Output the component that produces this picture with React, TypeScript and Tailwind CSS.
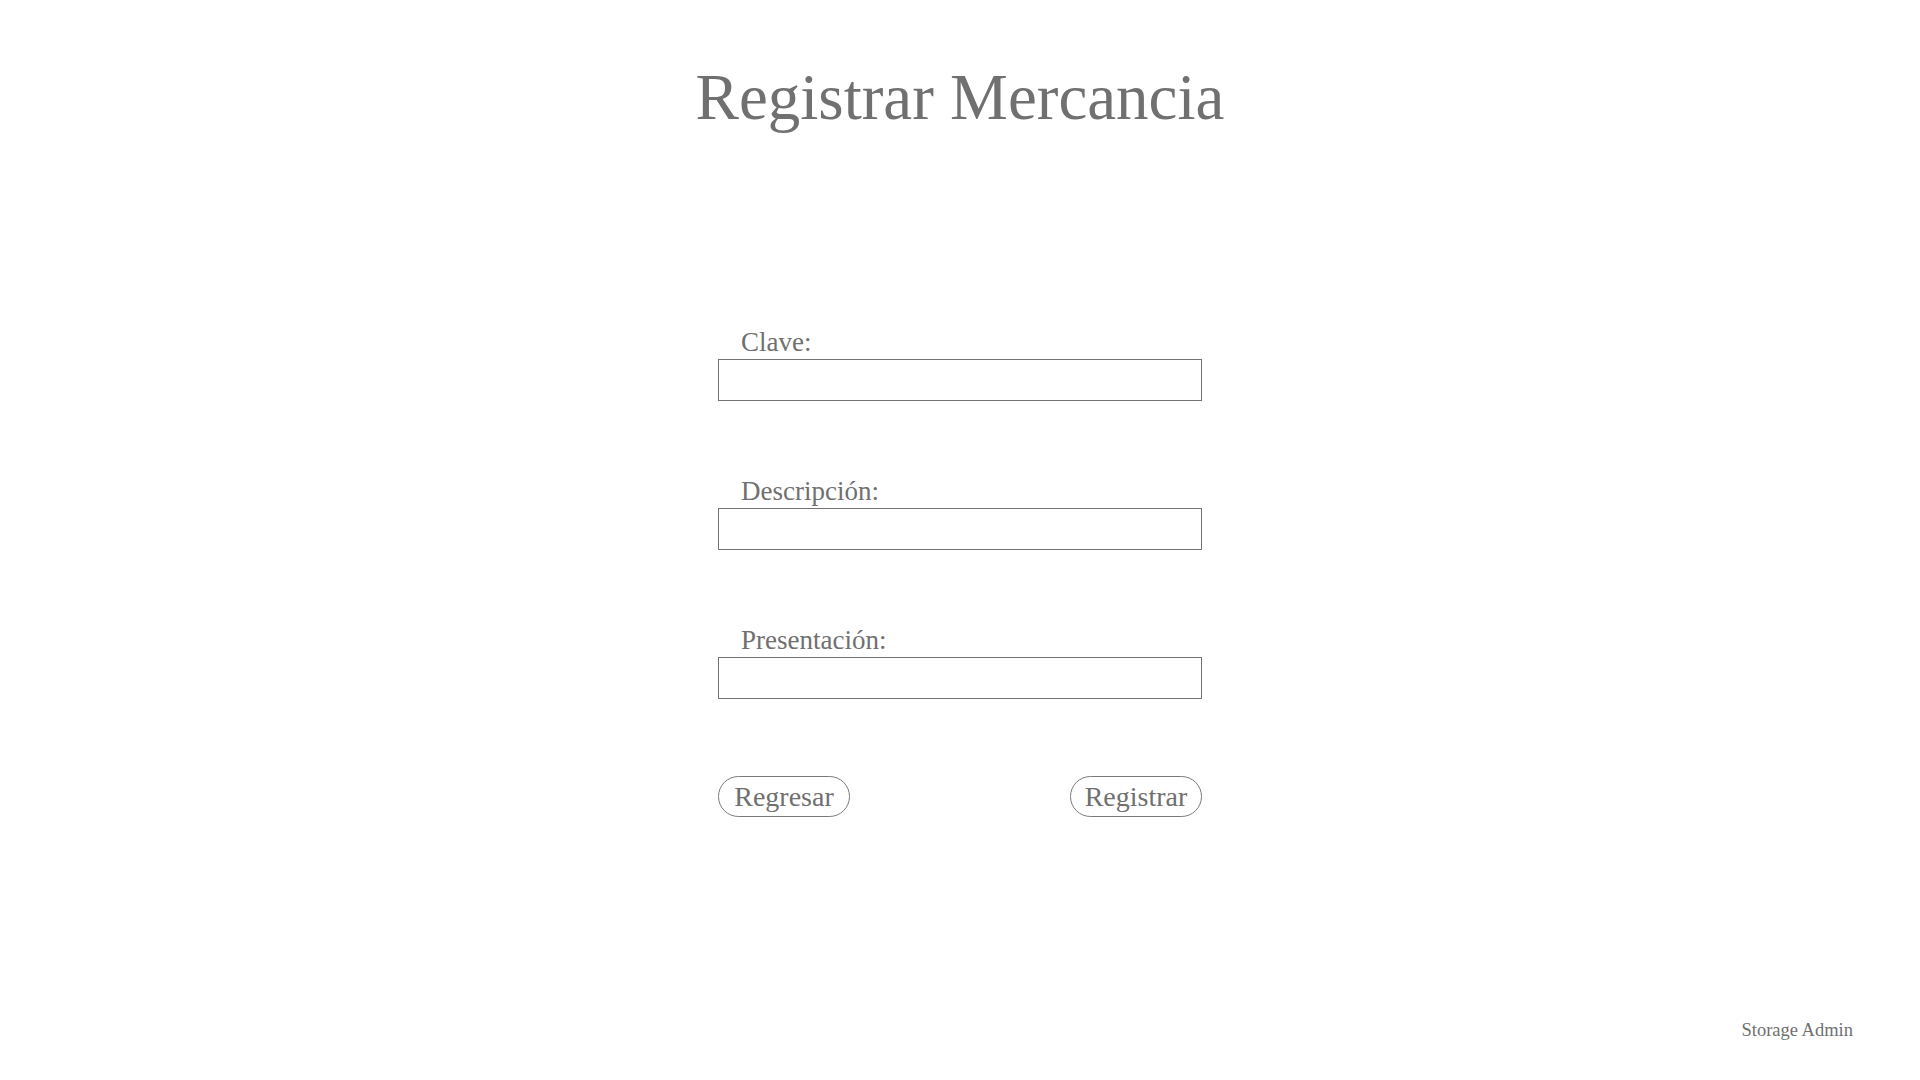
const serif = { fontFamily: '"Liberation Serif", "Times New Roman", serif' };

function Field({ label }: { label: string }) {
  return (
    <div className="flex flex-col">
      <label className="pl-[23px] text-[27px] leading-[27px] text-[#707070]">{label}</label>
      <input
        type="text"
        className="mt-[3px] h-[42px] w-full border border-[#737373] bg-white px-2 outline-none"
      />
    </div>
  );
}

export default function App() {
  return (
    <div className="flex h-screen w-full flex-col bg-white text-[#707070]" style={serif}>
      {/* Title */}
      <h1 className="pt-[65px] text-center text-[65px] leading-none font-normal text-[#707070]">
        Registrar Mercancia
      </h1>

      {/* Form */}
      <div className="mx-auto mt-[199px] flex w-[484px] flex-col gap-[77px]">
        <Field label="Clave:" />
        <Field label="Descripción:" />
        <Field label="Presentación:" />
      </div>

      <div className="mx-auto mt-[77px] flex w-[484px] items-center justify-between">
        <button className="flex h-[41px] w-[132px] items-center justify-center rounded-full border border-[#7a7a7a] text-[28px] leading-none text-[#707070]">
          Regresar
        </button>
        <button className="flex h-[41px] w-[132px] items-center justify-center rounded-full border border-[#7a7a7a] text-[28px] leading-none text-[#707070]">
          Registrar
        </button>
      </div>

      {/* Footer */}
      <div className="mt-auto self-end pr-[67px] pb-[41px] text-[18.5px] leading-none text-[#707070]">
        Storage Admin
      </div>
    </div>
  );
}
